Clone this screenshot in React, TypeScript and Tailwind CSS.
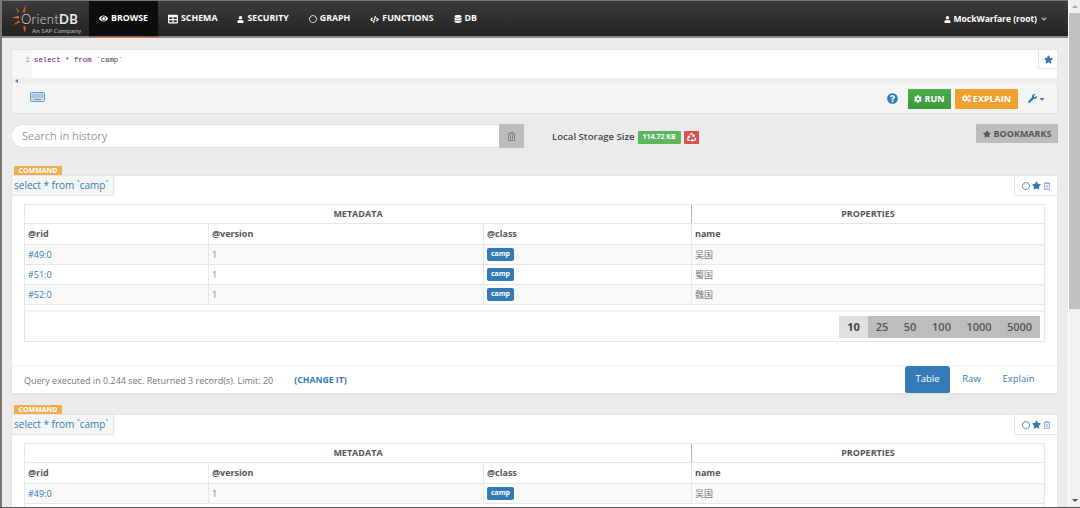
import {
  FaAngleDown,
  FaCaretDown,
  FaCode,
  FaCog,
  FaCogs,
  FaDatabase,
  FaEye,
  FaQuestionCircle,
  FaRecycle,
  FaRegCircle,
  FaRegTrashAlt,
  FaStar,
  FaTable,
  FaUser,
  FaWrench,
} from "react-icons/fa";
import type { ReactNode } from "react";

const font = "font-['Open_Sans','Noto_Sans_CJK_SC',sans-serif]";

function Logo() {
  return (
    <div className="relative w-[87px] h-[36px] shrink-0">
      <svg viewBox="0 0 40 36" className="absolute left-0 top-0 w-[40px] h-[36px]">
        <path d="M23.5 3.5 L23 11.5 L20.5 11 Z" fill="#e0581f" />
        <path d="M13.5 5.5 L17.8 10.5 L15.6 12 Z" fill="#a8511f" />
        <path d="M9.5 16.5 L17 15 L17 17.5 Z" fill="#ec6a2c" />
        <path d="M10.5 24 L17 19.5 L18 21.5 Z" fill="#e0581f" />
        <path d="M23 32 L21 25.5 L24 25.5 Z" fill="#e0581f" />
      </svg>
      <div className="absolute left-[19px] top-[10px] text-[13px] leading-[16px] text-[#dcdcdc] font-['Lato',sans-serif] tracking-[0.35px] whitespace-nowrap font-light">
        Orient<span className="font-bold text-[#e8e8e8]">DB</span>
      </div>
      <div className="absolute left-[30px] top-[26px] text-[6px] leading-[8px] text-[#a8a8a8] whitespace-nowrap font-semibold">
        An SAP Company
      </div>
    </div>
  );
}

function NavItem({ icon, label, active }: { icon: ReactNode; label: string; active?: boolean }) {
  return (
    <div
      className={`flex items-center gap-[3px] h-full text-[8.8px] font-bold text-white ${
        active ? "bg-[#0d0d0d] border-b border-[#b5501c] px-[10px] w-[69px]" : "px-[10px]"
      }`}
    >
      {icon}
      <span>{label}</span>
    </div>
  );
}

function Navbar() {
  return (
    <div className="h-[38px] shrink-0 flex items-stretch border-t border-[#777] border-b-2 border-b-[#8a8a8a] bg-gradient-to-b from-[#3c3c3c] to-[#232323]">
      <div className="w-[87px] shrink-0">
        <Logo />
      </div>
      <div className="flex items-stretch h-[36px]">
        <NavItem active icon={<FaEye className="text-[9px]" />} label="BROWSE" />
        <NavItem icon={<FaTable className="text-[10px]" />} label="SCHEMA" />
        <NavItem icon={<FaUser className="text-[7px]" />} label="SECURITY" />
        <NavItem icon={<FaRegCircle className="text-[8px]" />} label="GRAPH" />
        <NavItem icon={<FaCode className="text-[9px]" />} label="FUNCTIONS" />
        <NavItem icon={<FaDatabase className="text-[8px]" />} label="DB" />
      </div>
      <div className="ml-auto flex items-center gap-[3px] pr-[20px] text-[8.5px] font-bold text-white h-[36px]">
        <FaUser className="text-[7px]" />
        <span>MockWarfare (root)</span>
        <FaAngleDown className="text-[8px] text-[#bbb]" />
      </div>
    </div>
  );
}

function Editor() {
  return (
    <div className="mt-[11px] border border-[#e4e4e4] bg-[#f4f4f4]">
      <div className="relative h-[28px] bg-white flex">
        <div className="w-[20px] pt-[4px] pr-[2px] text-right bg-[#f6f6f6] text-[8px] leading-[12px] text-[#999] font-['Liberation_Mono',monospace]">
          1
        </div>
        <div className="pl-[2px] pt-[4px] text-[7.4px] leading-[12px] whitespace-pre text-[#444] font-['Liberation_Mono',monospace]">
          <span className="text-[#770088]">select</span> * <span className="text-[#770088]">from</span> `camp`
        </div>
        <div className="absolute right-[-1px] top-[-1px] w-[20px] h-[20px] bg-white border border-[#e4e4e4] flex items-center justify-center">
          <FaStar className="text-[9px] text-[#337ab7]" />
        </div>
      </div>
      <div className="h-[6px] bg-[#eeeeee] pl-[3px] flex items-center">
        <div className="w-0 h-0 border-y-[2px] border-y-transparent border-r-[3px] border-r-[#777]" />
      </div>
      <div className="h-[29px] flex items-center pl-[18px] pr-[11px]">
        <svg viewBox="0 0 15 10" className="w-[15px] h-[10px] mb-[3px]">
          <rect x="0.5" y="0.5" width="14" height="9" rx="1" fill="#c6dcf2" stroke="#6a9bcd" />
          <path d="M2 3h11M2 5h11" stroke="#6f94ba" strokeWidth="1" strokeDasharray="1 .7" />
          <path d="M4 7.5h7" stroke="#6f94ba" strokeWidth="1" />
        </svg>
        <FaQuestionCircle className="ml-auto text-[11px] text-[#337ab7]" />
        <div className="ml-[10px] w-[43px] h-[20px] flex items-center justify-center gap-[2px] rounded-[1px] bg-gradient-to-b from-[#4cae4c] to-[#3d983d] text-white text-[9px] font-bold">
          <FaCog className="text-[8px]" />
          RUN
        </div>
        <div className="ml-[4px] w-[63px] h-[20px] flex items-center justify-center gap-[2px] rounded-[1px] bg-[#f0a030] text-white text-[9px] font-bold">
          <FaCogs className="text-[9px]" />
          EXPLAIN
        </div>
        <div className="ml-[10px] flex items-center gap-[1px] text-[#337ab7]">
          <FaWrench className="text-[9px]" />
          <FaCaretDown className="text-[8px]" />
        </div>
      </div>
    </div>
  );
}

function HistoryBar() {
  return (
    <div className="mt-[10px] h-[24px] flex items-start">
      <div className="w-[488px] h-[24px] pl-[10px] bg-white border border-[#e4e4e4] border-r-0 rounded-l-[12px] flex items-center text-[11px] text-[#999]">
        Search in history
      </div>
      <div className="w-[25px] h-[24px] bg-[#bdbdbd] flex items-center justify-center">
        <FaRegTrashAlt className="text-[9px] text-[#777]" />
      </div>
      <div className="ml-[28px] h-[26px] flex items-center gap-[3px] text-[9.6px] font-semibold text-[#444]">
        <span>Local Storage Size</span>
        <span className="w-[43px] h-[13px] rounded-[1px] bg-[#5cb85c] text-white text-[7px] font-bold flex items-center justify-center">
          114.72 KB
        </span>
        <span className="w-[15px] h-[13px] rounded-[1px] bg-[#d9534f] text-white flex items-center justify-center">
          <FaRecycle className="text-[9px]" />
        </span>
      </div>
      <div className="ml-auto w-[82px] h-[19px] bg-[#bdbdbd] flex items-center justify-center gap-[3px] text-[9px] font-bold text-[#555]">
        <FaStar className="text-[8px]" />
        BOOKMARKS
      </div>
    </div>
  );
}

const columns = "grid grid-cols-[184px_275px_208px_1fr]";

function Row({ rid, name, odd }: { rid: string; name: string; odd: boolean }) {
  return (
    <div className={`${columns} h-[20px] border-b border-[#e6e6e6] text-[9px] ${odd ? "bg-[#f9f9f9]" : "bg-white"}`}>
      <div className="pl-[3px] flex items-center text-[#337ab7] border-r border-[#e6e6e6]">{rid}</div>
      <div className="pl-[3px] flex items-center text-[#8a7f6a] border-r border-[#e6e6e6]">1</div>
      <div className="pl-[3px] flex items-center border-r border-[#e6e6e6]">
        <span className="w-[27px] h-[13px] rounded-[2px] bg-[#337ab7] text-white text-[7px] font-bold flex items-center justify-center">
          camp
        </span>
      </div>
      <div className="pl-[3px] flex items-center text-[#777]">{name}</div>
    </div>
  );
}

function ResultCard({ rows, full }: { rows: { rid: string; name: string }[]; full?: boolean }) {
  return (
    <div className="relative">
      <div className="ml-[3px] w-[48px] h-[9px] rounded-t-[1px] bg-[#f0ad4e] text-white text-[7px] font-bold leading-[10px] text-center">
        COMMAND
      </div>
      <div className="bg-white border border-[#e4e4e4] border-b-2">
        <div className="flex h-[20px] items-stretch">
          <div className="w-[102px] bg-[#f5f5f5] border-r border-b border-[#e4e4e4] pl-[2px] flex items-center text-[10px] text-[#337ab7] whitespace-nowrap">
            select * from `camp`
          </div>
          <div className="ml-auto w-[43px] border-l border-b border-[#e4e4e4] flex items-center justify-center gap-[2px]">
            <FaRegCircle className="text-[8px] text-[#337ab7]" />
            <FaStar className="text-[9px] text-[#337ab7]" />
            <FaRegTrashAlt className="text-[8px] text-[#7aa5cc]" />
          </div>
        </div>
        <div className="mt-[8px] mx-[12px] border border-[#e6e6e6] border-b-0">
          <div className="flex h-[19px] border-b border-[#e6e6e6] text-[9px] font-bold text-[#555]">
            <div className="w-[667px] flex items-center justify-center border-r border-[#b5b5b5]">METADATA</div>
            <div className="flex-1 flex items-center justify-center">PROPERTIES</div>
          </div>
          <div className={`${columns} h-[21px] border-b border-[#e6e6e6] text-[9px] font-bold text-[#555]`}>
            <div className="pl-[3px] flex items-center border-r border-[#e6e6e6]">@rid</div>
            <div className="pl-[3px] flex items-center border-r border-[#e6e6e6]">@version</div>
            <div className="pl-[3px] flex items-center border-r border-[#e6e6e6]">@class</div>
            <div className="pl-[3px] flex items-center">name</div>
          </div>
          {rows.map((r, i) => (
            <Row key={r.rid} rid={r.rid} name={r.name} odd={i % 2 === 0} />
          ))}
          {full ? (
            <>
              <div className="h-[7px] bg-white border-b-2 border-[#f4f4f4]" />
              <div className="h-[30px] border-b border-[#e6e6e6] flex items-start justify-end pr-[4px] pt-[4px]">
                <div className="flex h-[22px] bg-[#bdbdbd] text-[11px] font-semibold text-[#555]">
                  <span className="w-[29px] bg-[#e0e0e0] flex items-center justify-center font-bold text-[#444]">10</span>
                  <span className="w-[28px] flex items-center justify-center">25</span>
                  <span className="w-[28px] flex items-center justify-center">50</span>
                  <span className="w-[35px] flex items-center justify-center">100</span>
                  <span className="w-[40px] flex items-center justify-center">1000</span>
                  <span className="w-[41px] flex items-center justify-center">5000</span>
                </div>
              </div>
            </>
          ) : (
            <div className="h-[20px]" />
          )}
        </div>
        {full && (
          <>
            <div className="h-[23px]" />
            <div className="h-[28px] border-t-2 border-[#f6f6f6] flex items-end pl-[12px] pr-[11px]">
              <div className="h-[24px] flex items-center text-[9px] text-[#777] whitespace-nowrap">
                Query executed in 0.244 sec. Returned 3 record(s). Limit: 20
                <span className="ml-[21px] text-[8.7px] font-bold text-[#337ab7]">(CHANGE IT)</span>
              </div>
              <div className="ml-auto flex items-stretch h-[27px] text-[9.5px] text-[#337ab7]">
                <div className="w-[45px] rounded-t-[3px] rounded-b-[2px] bg-[#337ab7] text-white flex items-center justify-center">
                  Table
                </div>
                <div className="w-[43px] flex items-center justify-center">Raw</div>
                <div className="w-[51px] flex items-center justify-center mr-[2px]">Explain</div>
              </div>
            </div>
          </>
        )}
      </div>
    </div>
  );
}

function Scrollbar() {
  return (
    <div className="w-[12px] shrink-0 bg-[#f1f1f1] border-l border-white flex flex-col items-center">
      <div className="h-[13px] w-full flex items-center justify-center">
        <div className="w-0 h-0 border-x-[3px] border-x-transparent border-b-[3px] border-b-[#aaa]" />
      </div>
      <div className="w-full h-[296px] bg-[#c1c1c1]" />
      <div className="mt-auto h-[14px] w-full flex items-center justify-center">
        <div className="w-0 h-0 border-x-[3px] border-x-transparent border-t-[3px] border-t-[#555]" />
      </div>
    </div>
  );
}

export default function App() {
  return (
    <div className={`${font} w-[1080px] h-[508px] overflow-hidden flex bg-[#ebebeb] border-b border-[#555]`}>
      <div className="w-[1068px] shrink-0 flex flex-col overflow-hidden border-l-2 border-l-[#777]">
        <Navbar />
        <div className="pl-[9px] pr-[10px] flex-1 overflow-hidden">
          <Editor />
          <HistoryBar />
          <div className="mt-[18px] flex flex-col gap-[10px]">
            <ResultCard
              full
              rows={[
                { rid: "#49:0", name: "吴国" },
                { rid: "#51:0", name: "蜀国" },
                { rid: "#52:0", name: "魏国" },
              ]}
            />
            <ResultCard rows={[{ rid: "#49:0", name: "吴国" }]} />
          </div>
        </div>
      </div>
      <Scrollbar />
    </div>
  );
}
